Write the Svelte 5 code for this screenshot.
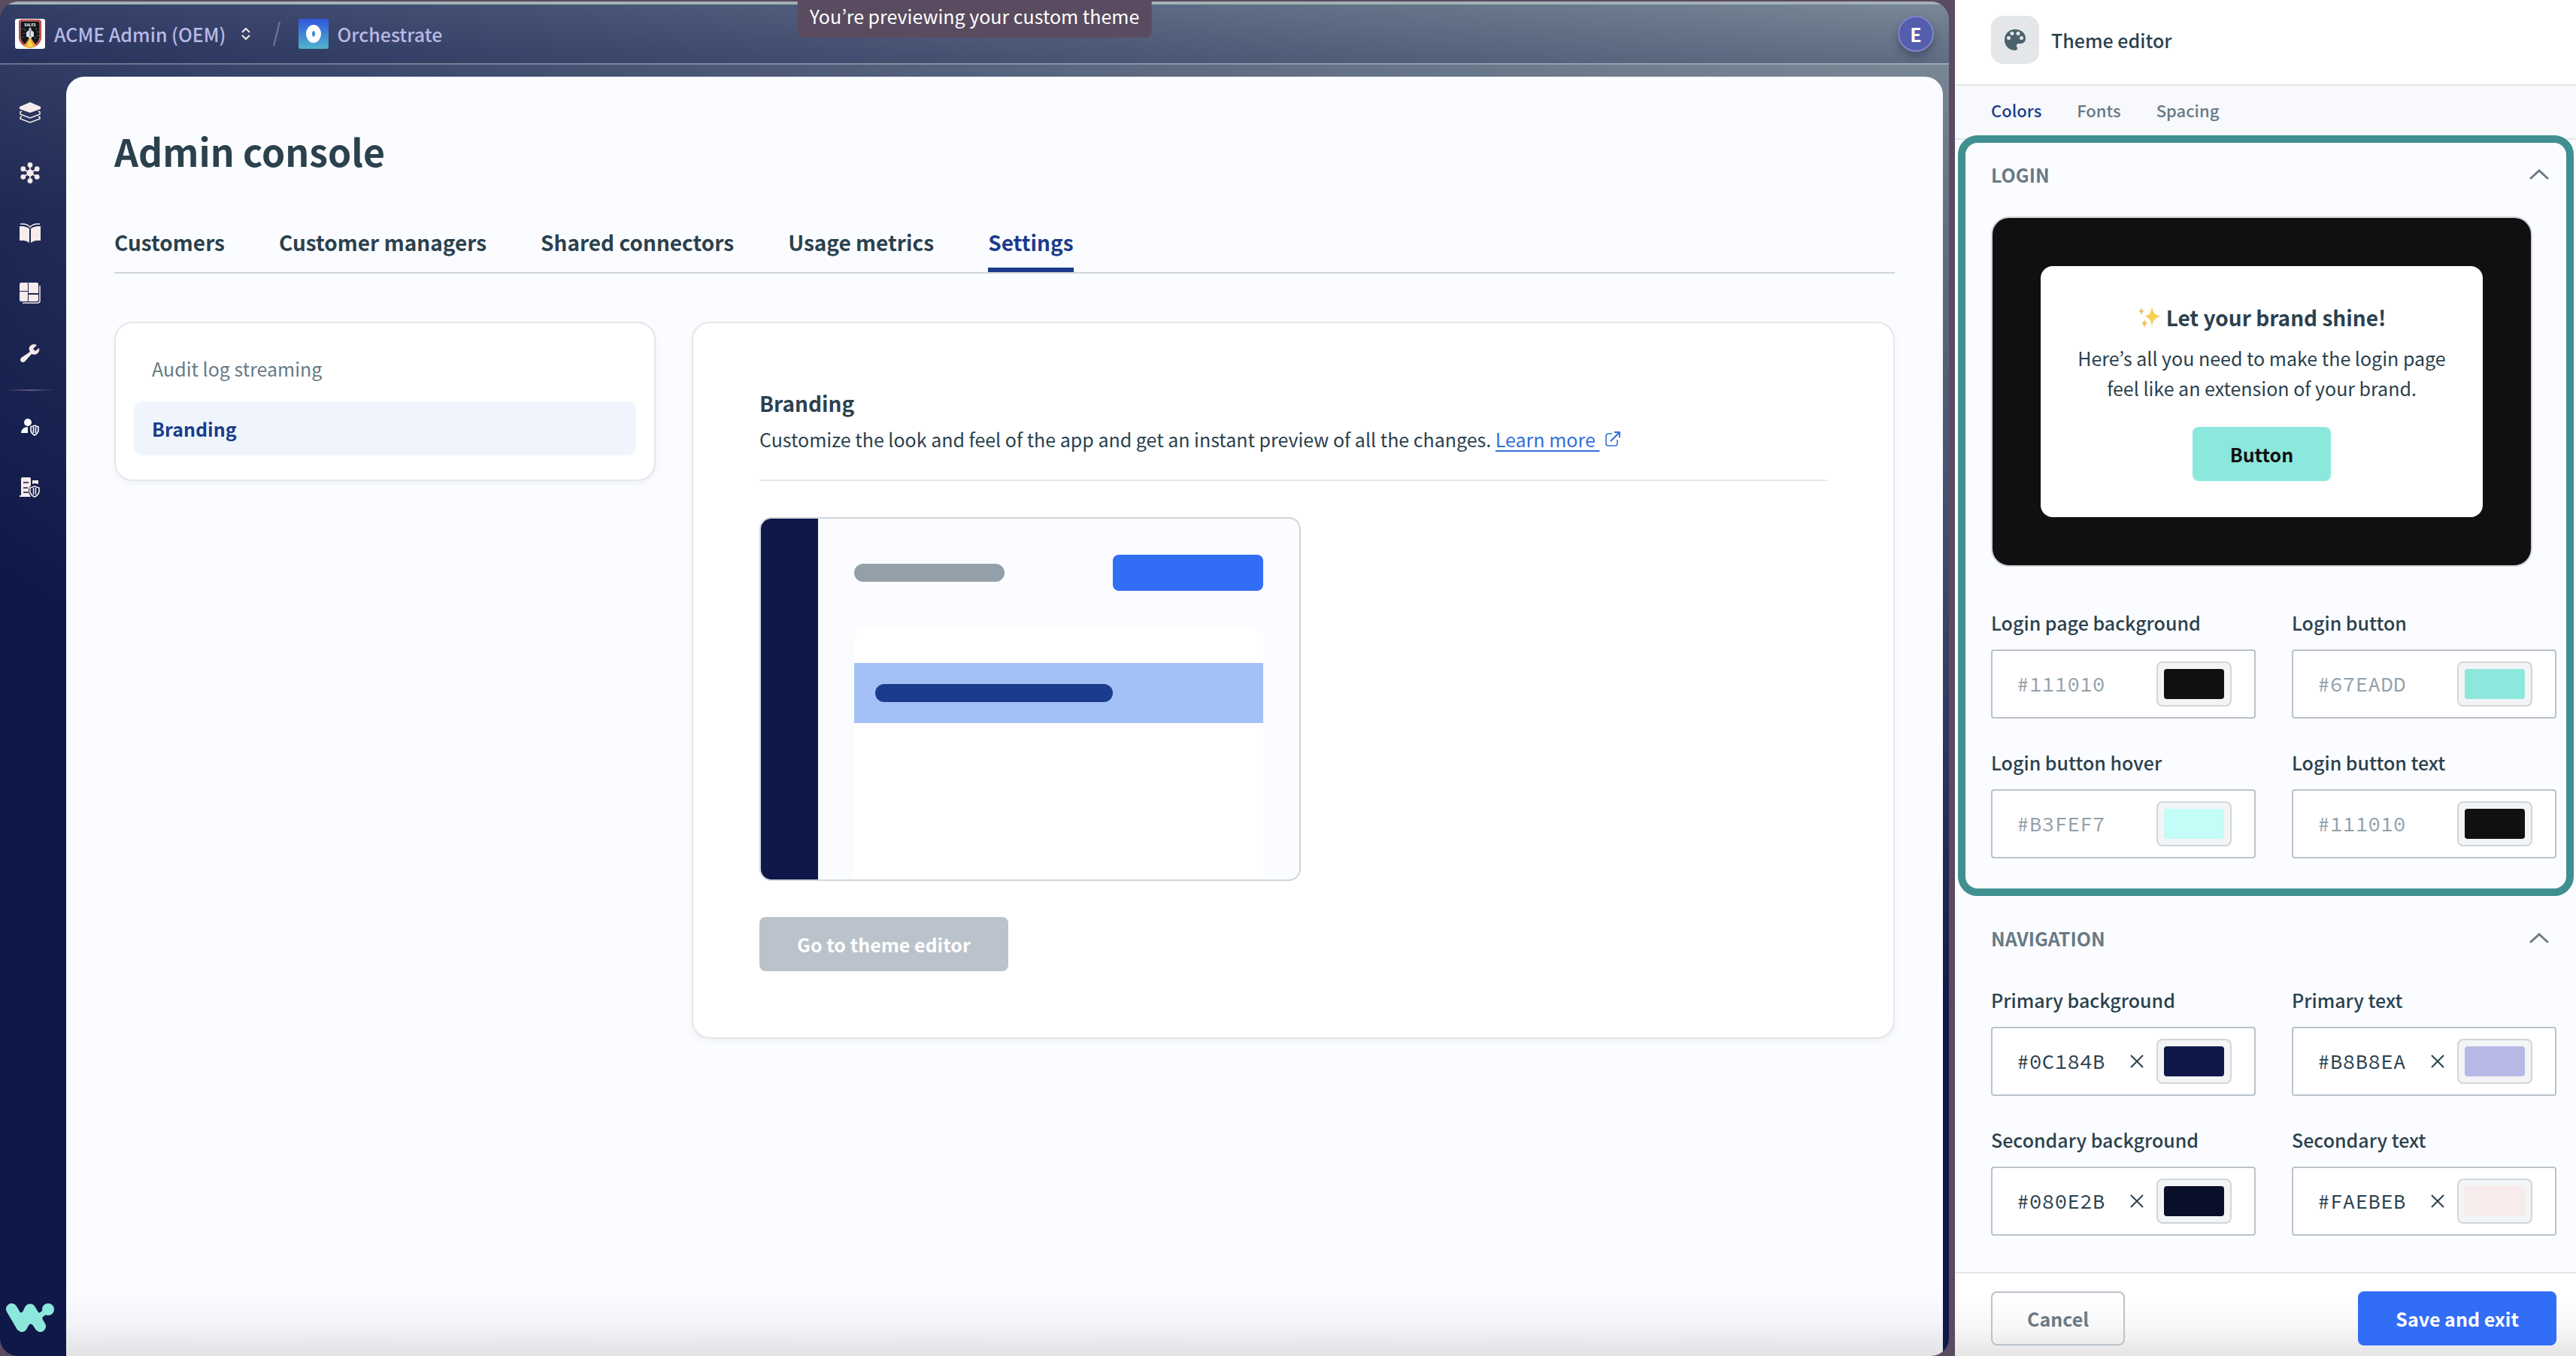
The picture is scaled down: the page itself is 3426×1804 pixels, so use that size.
<script lang="ts">
	type Field = { id: string; label: string; hex: string; swatch: string; custom?: boolean };

	const tabs = ['Customers', 'Customer managers', 'Shared connectors', 'Usage metrics', 'Settings'];
	const editorTabs = ['Colors', 'Fonts', 'Spacing'];

	// swatch holds the rendered colour, hex the value typed by the user
	const loginFields: Field[] = [
		{ id: 'login-bg', label: 'Login page background', hex: '#111010', swatch: '#111010' },
		{ id: 'login-button', label: 'Login button', hex: '#67EADD', swatch: '#8ce8dd' },
		{ id: 'login-hover', label: 'Login button hover', hex: '#B3FEF7', swatch: '#c4fcf7' },
		{ id: 'login-text', label: 'Login button text', hex: '#111010', swatch: '#111010' }
	];
	const navFields: Field[] = [
		{ id: 'nav-bg', label: 'Primary background', hex: '#0C184B', swatch: '#0f1849', custom: true },
		{ id: 'nav-text', label: 'Primary text', hex: '#B8B8EA', swatch: '#b8b8e7', custom: true },
		{ id: 'nav-bg-2', label: 'Secondary background', hex: '#080E2B', swatch: '#090e29', custom: true },
		{ id: 'nav-text-2', label: 'Secondary text', hex: '#FAEBEB', swatch: '#f7ebeb', custom: true }
	];

	let activeTab = $state('Settings');
	let activeEditorTab = $state('Colors');
	let loginOpen = $state(true);
	let navOpen = $state(true);
</script>

{#snippet chevron()}
	<svg class="chevron" viewBox="0 0 26 14" aria-hidden="true">
		<path d="M2 12 13 2l11 10" fill="none" stroke="currentColor" stroke-width="3" stroke-linecap="round" />
	</svg>
{/snippet}

{#snippet colorFields(fields: Field[])}
	<div class="fields">
		{#each fields as f (f.id)}
			<div class="field">
				<label for={f.id}>{f.label}</label>
				<div class="color-box">
					<input
						class="hex"
						id={f.id}
						type="text"
						value={f.custom ? f.hex : ''}
						placeholder={f.custom ? '' : f.hex}
					/>
					{#if f.custom}
						<button class="clear" type="button" aria-label="Clear {f.label}">
							<svg viewBox="0 0 18 18" aria-hidden="true">
								<path d="M1 1l16 16M17 1 1 17" stroke="currentColor" stroke-width="2" />
							</svg>
						</button>
					{/if}
					<input class="swatch" type="color" value={f.swatch} aria-label="{f.label} picker" />
				</div>
			</div>
		{/each}
	</div>
{/snippet}

<div class="screen">
	<div class="workspace">
		<div class="banner">You’re previewing your custom theme</div>

		<div class="app">
			<header class="topbar">
				<button class="crumb" type="button">
					<svg class="crumb-logo" viewBox="0 0 40 40" aria-hidden="true">
						<rect width="40" height="40" rx="3" fill="#fff" />
						<path d="M8 1h24q3 1 3 4v20q-1 11-15 14Q6 36 5 25V5q0-3 3-4Z" fill="#c9302c" />
						<path d="M9 3h22q2 1 2 3v19q-1 9-13 12Q8 34 7 25V6q0-2 2-3Z" fill="#15171b" stroke="#f1e5dc" stroke-width=".6" />
						<path d="M20 24l-8 12q3 2 8 3 5-1 8-3Z" fill="#f2a33a" />
						<path d="M20 26l-4 11q2 1 4 1l4-1Z" fill="#f8d34c" />
						<path d="M20 11q2 2 2 5h1l2 2v6h-3v2h-4v-2h-3v-6l2-2h1q0-3 2-5Z" fill="#d9dfe6" />
						<path d="M20 14v10" stroke="#667" stroke-width="1" />
						<path d="M10 13v1m2 5v1m-2 4v1m18-12v1m2 3v1m-3 7v1m3-4v1M13 14v1" stroke="#ddd" stroke-width="1" />
						<text x="20" y="10" text-anchor="middle" font-size="5" font-weight="700" fill="#fff">SALES</text>
					</svg>
					ACME Admin (OEM)
					<svg class="sorter" viewBox="0 0 12 16" aria-hidden="true">
						<path d="M1 6 6 1l5 5M1 10l5 5 5-5" fill="none" stroke="#f7ebeb" stroke-width="2" />
					</svg>
				</button>
				<svg class="slash" viewBox="0 0 10 34" aria-hidden="true">
					<path d="M9 1 1 33" stroke="#8a8fa8" stroke-opacity=".7" stroke-width="2" />
				</svg>
				<a class="crumb" href="#orchestrate">
					<svg class="crumb-logo" viewBox="0 0 40 40" aria-hidden="true">
						<defs>
							<linearGradient id="orch" x1="0" y1="0" x2="0" y2="1">
								<stop offset="0" stop-color="#3057dd" />
								<stop offset="1" stop-color="#52b4cb" />
							</linearGradient>
						</defs>
						<rect width="40" height="40" rx="3" fill="url(#orch)" />
						<ellipse cx="20" cy="20" rx="6" ry="8" fill="none" stroke="#fff" stroke-width="8" />
					</svg>
					Orchestrate
				</a>
				<button class="avatar" type="button">E</button>
			</header>

			<div class="body">
				<nav class="rail" aria-label="Main">
					<a href="#projects" aria-label="Projects">
						<svg viewBox="0 0 28 28">
							<path d="M14 0 28 6v3l-14 5L0 9V6Z" fill="currentColor" />
							<path d="M3 12 1 13v3l13 5 13-5v-3l-2-1M3 19l-2 1v2l13 5 13-5v-2l-2-1" fill="none" stroke="currentColor" stroke-width="1.5" />
						</svg>
					</a>
					<a href="#connections" aria-label="Connections">
						<svg viewBox="0 0 28 28" fill="currentColor">
							<path d="M14 3v22M5 9l18 10M23 9 5 19" stroke="currentColor" stroke-width="1.8" />
							<circle cx="14" cy="14" r="4.6" />
							<circle cx="14" cy="3.4" r="3.4" /><circle cx="14" cy="24.6" r="3.4" />
							<circle cx="4.8" cy="8.7" r="3.4" /><circle cx="23.2" cy="8.7" r="3.4" />
							<circle cx="4.8" cy="19.3" r="3.4" /><circle cx="23.2" cy="19.3" r="3.4" />
						</svg>
					</a>
					<a href="#library" aria-label="Library">
						<svg viewBox="0 0 28 28" fill="currentColor">
							<path d="M0 5h5q5 1 8 3v19q-4-3-8-3H0ZM28 5h-5q-5 1-8 3v19q4-3 8-3h5Z" />
							<path d="M1 2h4q5 0 9 4 4-4 9-4h4" fill="none" stroke="currentColor" stroke-width="1.6" />
						</svg>
					</a>
					<a href="#dashboards" aria-label="Dashboards">
						<svg viewBox="0 0 28 28" fill="currentColor">
							<path d="M2 0h9v11H0V2q0-2 2-2ZM12 0h11q2 0 2 2v12H12ZM0 12h11v13H2q-2 0-2-2ZM12 16h13v7q0 2-2 2H12Z" />
							<path d="M27 4v20q0 3-3 3H4" fill="none" stroke="currentColor" stroke-width="1.5" />
						</svg>
					</a>
					<a href="#tools" aria-label="Tools">
						<svg viewBox="0 0 28 28" fill="currentColor">
							<path d="M23 3q-6-3-9.5 2-2 3 .5 7L2 20q-2 3 0 5t5 0l9-10q5 2 8-1 3-3 2-7l-5 4-3-3Z" />
						</svg>
					</a>
					<hr />
					<a href="#user-admin" aria-label="User admin">
						<svg viewBox="0 0 28 28" fill="#fff">
							<circle cx="11" cy="8" r="5" />
							<path d="M2 22q1-8 9-8v8Z" />
							<path d="M20 12l5 2v5q-1 4-5 6-4-2-5-6v-5Z" fill="none" stroke="#fff" stroke-width="1.6" />
							<path d="M18.5 14v8M21.5 14v8" stroke="#fff" stroke-width="1.6" />
						</svg>
					</a>
					<a href="#company-admin" aria-label="Company admin">
						<svg viewBox="0 0 28 28" fill="currentColor">
							<path d="M2 3q0-2 2-2h9q2 0 2 2v9q-3 2-3 6 0 5 3 9H0v-2h2Z" />
							<path d="M17 5h8v5l-5-1-3 1Z" />
							<path d="M5 8h7M5 15h6M5 21h7" stroke="#0f1849" stroke-width="1.5" />
							<path d="M20 13l6 2v5q-1 5-6 7-5-2-6-7v-5Z" fill="#0f1849" stroke="currentColor" stroke-width="1.6" />
							<path d="M18.5 15v9M21.5 15v9" stroke="currentColor" stroke-width="1.6" />
						</svg>
					</a>
					<a class="brand" href="#home" aria-label="Home">
						<svg viewBox="0 0 64 38" fill="#8ce8dd">
							<path d="M7.5 7.5 21 30.5 32 8l13.5 22.5" fill="none" stroke="#8ce8dd" stroke-width="15" stroke-linecap="round" stroke-linejoin="round" />
							<path d="M14 8q3 5 7 4t4-5l14 2q4 6 8 2l2 5q-2 2 0 5L38 32q-3-5-5.5-4.5T28 32H18Z" />
							<path d="M56 8 46 16" stroke="#8ce8dd" stroke-width="7" />
							<circle cx="56" cy="8" r="8" />
						</svg>
					</a>
				</nav>

				<main class="content">
					<h1>Admin console</h1>
					<div class="tabs" role="tablist">
						{#each tabs as tab}
							<button
								class:active={tab === activeTab}
								type="button"
								role="tab"
								aria-selected={tab === activeTab}
								onclick={() => (activeTab = tab)}>{tab}</button
							>
						{/each}
					</div>

					<div class="columns">
						<nav class="card menu" aria-label="Settings">
							<a href="#audit">Audit log streaming</a>
							<a class="current" href="#branding" aria-current="page">Branding</a>
						</nav>

						<section class="card branding">
							<h2>Branding</h2>
							<p class="lead">
								Customize the look and feel of the app and get an instant preview of all the changes.
								<a href="#learn"
									><span>Learn more&nbsp;</span><svg viewBox="0 0 20 20" aria-hidden="true">
										<path d="M9 3H4Q1 3 1 6v10q0 3 3 3h9q3 0 3-3v-5" fill="none" stroke="currentColor" stroke-width="1.6" />
										<path d="M7 13 18 2M12 1h7v7" fill="none" stroke="currentColor" stroke-width="2.2" />
									</svg></a
								>
							</p>
							<div class="mock" aria-hidden="true">
								<div class="mock-rail"></div>
								<div class="mock-page">
									<div class="mock-head">
										<span class="mock-title"></span>
										<span class="mock-button"></span>
									</div>
									<div class="mock-list">
										<div class="mock-row"><span></span></div>
									</div>
								</div>
							</div>
							<button class="btn disabled" type="button" disabled>Go to theme editor</button>
						</section>
					</div>
				</main>
			</div>
		</div>
	</div>

	<aside class="editor">
		<header class="editor-head">
			<span class="editor-icon">
				<svg viewBox="0 0 28 28" aria-hidden="true">
					<path
						d="M14 0C6 0 0 6 0 14s6 14 14 14q3 0 3-3 0-1-1-2-1-3 2-4h4q6-1 6-7C28 5 22 0 14 0Z"
						fill="#4b616d"
					/>
					<g fill="#e3e7ea">
						<circle cx="5.5" cy="11.5" r="2.5" /><circle cx="10" cy="5.5" r="2.5" />
						<circle cx="18" cy="5.5" r="2.5" /><circle cx="22.5" cy="11.5" r="2.5" />
					</g>
				</svg>
			</span>
			<h2>Theme editor</h2>
		</header>
		<div class="editor-tabs" role="tablist">
			{#each editorTabs as tab}
				<button
					class:active={tab === activeEditorTab}
					type="button"
					role="tab"
					aria-selected={tab === activeEditorTab}
					onclick={() => (activeEditorTab = tab)}>{tab}</button
				>
			{/each}
		</div>

		<div class="editor-body">
			<section class="group highlighted">
				<button class="group-head" type="button" aria-expanded={loginOpen} onclick={() => (loginOpen = !loginOpen)}>
					LOGIN {@render chevron()}
				</button>
				{#if loginOpen}
					<div class="login-preview">
						<div class="login-card">
							<h3>
								<svg viewBox="0 0 30 30" aria-hidden="true">
									<path d="M19 1q1 11 11 13-10 2-11 14-1-12-9-14 8-2 9-13Z" fill="#f7cf52" />
									<path d="M5 1q0 5 4 6-4 1-4 6 0-5-4-6 4-1 4-6ZM9 18q1 4 4 5-3 1-4 6-1-5-4-6 3-1 4-5Z" fill="#f5bd60" />
								</svg>
								Let your brand shine!
							</h3>
							<p>Here’s all you need to make the login page feel like an extension of your brand.</p>
							<button class="btn sample" type="button">Button</button>
						</div>
					</div>
					{@render colorFields(loginFields)}
				{/if}
			</section>
			<section class="group">
				<button class="group-head" type="button" aria-expanded={navOpen} onclick={() => (navOpen = !navOpen)}>
					NAVIGATION {@render chevron()}
				</button>
				{#if navOpen}
					{@render colorFields(navFields)}
				{/if}
			</section>
		</div>

		<footer class="editor-foot">
			<button class="btn outline" type="button">Cancel</button>
			<button class="btn primary" type="button">Save and exit</button>
		</footer>
	</aside>
</div>

<style>
	:global(body) {
		margin: 0;
	}

	.screen {
		display: flex;
		height: 100vh;
		overflow: hidden;
		background: #5a4b60;
		color: #2b414d;
		font-family: 'Source Sans Pro', 'Noto Sans CJK JP', 'Noto Sans', sans-serif;
		font-size: 25px;
		line-height: 40px;
	}
	.screen * {
		box-sizing: border-box;
	}
	h1,
	h2,
	h3,
	p {
		margin: 0;
	}
	button,
	input {
		font: inherit;
		color: inherit;
		margin: 0;
	}
	button {
		padding: 0;
		border: 0;
		background: none;
		cursor: pointer;
	}
	a {
		color: inherit;
		text-decoration: none;
	}
	svg {
		display: block;
		flex: none;
	}

	.workspace {
		position: relative;
		display: flex;
		flex: 1;
		min-width: 0;
		margin-right: 8px;
		padding-top: 2px;
	}
	.banner {
		position: absolute;
		z-index: 1;
		top: 0;
		left: 50%;
		transform: translateX(-50%);
		padding: 1px 16px 9px;
		border-radius: 0 0 8px 8px;
		background: #5a4b60;
		color: #fff;
		white-space: nowrap;
	}
	.app {
		display: flex;
		flex: 1;
		flex-direction: column;
		min-width: 0;
		overflow: hidden;
		border-radius: 24px;
		background:
			linear-gradient(rgb(150 170 200 / 0.18), transparent 280px),
			radial-gradient(120% 75% at 100% 0, #7a8891, rgb(15 24 73 / 0)),
			#0f1849;
	}

	.topbar {
		display: flex;
		align-items: center;
		height: 84px;
		padding: 0 20px;
		border-top: 4px solid #a3b1b5;
		border-bottom: 2px solid rgb(255 255 255 / 0.3);
		background: linear-gradient(rgb(15 24 73 / 0.05), rgb(15 24 73 / 0.25));
		color: #b8b8e7;
	}
	.crumb {
		display: flex;
		align-items: center;
		font-weight: 500;
	}
	.crumb-logo {
		width: 40px;
		height: 40px;
		margin-right: 12px;
	}
	.sorter {
		width: 12px;
		height: 16px;
		margin-left: 20px;
	}
	.slash {
		width: 10px;
		height: 34px;
		margin: 0 24px 0 30px;
	}
	.avatar {
		width: 48px;
		height: 48px;
		margin-left: auto;
		border: 2px solid #8085c8;
		border-radius: 50%;
		background: #535ead;
		box-shadow: 0 6px 12px rgb(20 24 60 / 0.35);
		color: #fff;
		font-weight: 700;
	}

	.body {
		display: flex;
		flex: 1;
		min-height: 0;
	}
	.rail {
		display: flex;
		flex: 0 0 88px;
		flex-direction: column;
		padding: 24px 8px 32px 0;
		color: #f7ebeb;
	}
	.rail a {
		display: flex;
		align-items: center;
		justify-content: center;
		height: 80px;
	}
	.rail svg {
		width: 28px;
		height: 28px;
	}
	.rail hr {
		width: 64px;
		height: 2px;
		margin: 8px auto;
		border: 0;
		background: linear-gradient(90deg, transparent, #5f5a80, transparent);
	}
	.rail .brand {
		height: 38px;
		margin-top: auto;
	}
	.rail .brand svg {
		width: 64px;
		height: 38px;
	}

	.content {
		flex: 1;
		min-width: 0;
		margin: 16px 8px 0 0;
		padding: 66px 64px 0;
		border-radius: 24px 24px 0 0;
		background:
			linear-gradient(transparent calc(100% - 88px), rgb(0 0 0 / 0.03) calc(100% - 44px), rgb(0 0 0 / 0.1)),
			#fbfcff;
	}
	h1 {
		font-size: 50px;
		font-weight: 700;
		line-height: 64px;
	}
	.tabs {
		display: flex;
		gap: 72px;
		margin-top: 70px;
		border-bottom: 2px solid #d0d6db;
	}
	.tabs button {
		padding-bottom: 14px;
		border-bottom: 6px solid transparent;
		font-size: 28px;
		font-weight: 700;
	}
	.tabs .active {
		border-color: #1b3c8c;
		color: #1b3c8c;
	}

	.columns {
		display: grid;
		grid-template-columns: 720fr 1600fr;
		align-items: start;
		gap: 48px;
		margin-top: 64px;
	}
	.card {
		border: 2px solid #e3e7ea;
		border-radius: 24px;
		background: #fff;
		box-shadow: 0 4px 8px rgb(43 65 77 / 0.05);
	}
	.menu {
		display: grid;
		gap: 8px;
		padding: 24px 24px 32px;
	}
	.menu a {
		padding: 16px 24px;
		border-radius: 12px;
		color: #687a85;
	}
	.menu .current {
		background: #f0f5fd;
		color: #1b3c8c;
		font-weight: 700;
	}
	.branding {
		padding: 86px 88px 88px;
	}
	.branding h2 {
		font-size: 28px;
		font-weight: 700;
	}
	.lead {
		margin-top: 8px;
		padding-bottom: 34px;
		border-bottom: 2px solid #e3e7ea;
	}
	.lead a {
		display: inline-flex;
		align-items: center;
		gap: 8px;
		color: #3371d6;
	}
	.lead a span {
		text-decoration: underline;
		text-decoration-thickness: 2px;
		text-underline-offset: 4px;
	}
	.lead svg {
		width: 20px;
		height: 20px;
	}

	.mock {
		display: flex;
		width: 720px;
		max-width: 100%;
		height: 484px;
		margin: 48px 0;
		overflow: hidden;
		border: 2px solid #cfd5db;
		border-radius: 16px;
		background: #fbfcff;
	}
	.mock-rail {
		width: 76px;
		background: #0f1849;
	}
	.mock-page {
		display: flex;
		flex: 1;
		flex-direction: column;
		padding: 48px 48px 0;
	}
	.mock-head {
		display: flex;
		align-items: center;
		justify-content: space-between;
	}
	.mock-title {
		width: 200px;
		height: 24px;
		border-radius: 12px;
		background: #93a0a9;
	}
	.mock-button {
		width: 200px;
		height: 48px;
		border-radius: 8px;
		background: #326df5;
	}
	.mock-list {
		flex: 1;
		margin-top: 48px;
		padding-top: 48px;
		border-radius: 16px 16px 0 0;
		background: #fff;
	}
	.mock-row {
		display: flex;
		align-items: center;
		height: 80px;
		padding-left: 28px;
		background: #a4c1f7;
	}
	.mock-row span {
		width: 316px;
		height: 24px;
		border-radius: 12px;
		background: #1b3c8c;
	}

	.btn {
		height: 72px;
		padding: 0 50px;
		border-radius: 8px;
		font-weight: 700;
	}
	.disabled {
		background: #bac3cb;
		color: #fff;
	}
	.primary {
		background: #326df5;
		color: #fff;
	}
	.outline {
		border: 2px solid #bac3cb;
		background: none;
		color: #687a85;
		padding: 0 46px;
	}
	.sample {
		background: #8ce8dd;
		color: #111010;
	}

	.editor {
		display: flex;
		flex: 0 0 826px;
		flex-direction: column;
		background: #fbfcff;
	}
	.editor-head {
		display: flex;
		align-items: center;
		gap: 16px;
		padding: 21px 48px 27px;
		border-bottom: 2px solid #e3e7ea;
		background: #fff;
	}
	.editor-head h2 {
		font-size: 25px;
		font-weight: 500;
	}
	.editor-icon {
		display: grid;
		place-items: center;
		width: 64px;
		height: 64px;
		border-radius: 16px;
		background: #e3e7ea;
	}
	.editor-icon svg {
		width: 28px;
		height: 28px;
	}
	.editor-tabs {
		display: flex;
		gap: 47px;
		height: 72px;
		padding: 12px 48px 0;
		border-bottom: 2px solid #e3e7ea;
		background: #f7f9fc;
		color: #687a85;
		font-size: 22px;
	}
	.editor-tabs button {
		align-self: start;
		font-weight: 500;
	}
	.editor-tabs .active {
		color: #1b3c8c;
	}

	.editor-body {
		flex: 1;
		min-height: 0;
	}
	.group {
		position: relative;
		padding: 34px 26px 0 48px;
	}
	.highlighted {
		padding-top: 26px;
		padding-bottom: 52px;
	}
	.highlighted::after {
		content: '';
		position: absolute;
		inset: -6px 3px 2px 4px;
		border: 10px solid #408f91;
		border-radius: 26px;
		pointer-events: none;
	}
	.group-head {
		display: flex;
		align-items: center;
		justify-content: space-between;
		width: 100%;
		padding-right: 10px;
		color: #687a85;
		font-weight: 700;
	}
	.chevron {
		width: 26px;
		height: 14px;
	}
	.fields {
		display: grid;
		grid-template-columns: 1fr 1fr;
		gap: 38px 48px;
		margin-top: 42px;
	}
	.field {
		display: grid;
		gap: 16px;
	}
	.field label {
		font-weight: 500;
	}
	.color-box {
		display: flex;
		align-items: center;
		height: 92px;
		padding: 0 30px 0 32px;
		border: 2px solid #bac3cb;
		border-radius: 4px;
		background: #fff;
	}
	.hex {
		flex: 1;
		width: 0;
		padding: 0;
		border: 0;
		outline: 0;
		background: none;
		font-family: 'Source Code Pro', 'Liberation Mono', monospace;
		font-size: 28px;
	}
	.hex::placeholder {
		color: #93a0a9;
		opacity: 1;
	}
	.clear {
		margin-right: 17px;
	}
	.clear svg {
		width: 18px;
		height: 18px;
	}
	.swatch {
		appearance: none;
		width: 100px;
		height: 60px;
		padding: 0;
		border: 2px solid #d0d6db;
		border-radius: 8px;
		background: #f2f4f5;
	}
	.swatch::-webkit-color-swatch-wrapper {
		padding: 8px;
	}
	.swatch::-webkit-color-swatch {
		border: 0;
		border-radius: 4px;
	}

	.login-preview {
		margin: 36px 32px 54px 0;
		padding: 64px;
		border: 2px solid #cfd5db;
		border-radius: 24px;
		background: #111010;
	}
	.login-preview + .fields {
		margin-top: 0;
	}
	.login-card {
		display: flex;
		flex-direction: column;
		align-items: center;
		padding: 48px 40px;
		border-radius: 16px;
		background: #fff;
		text-align: center;
	}
	.login-card h3 {
		display: flex;
		align-items: center;
		gap: 8px;
		font-size: 28px;
		font-weight: 700;
	}
	.login-card h3 svg {
		width: 30px;
		height: 30px;
	}
	.login-card p {
		margin: 14px 0 32px;
	}

	.editor-foot {
		display: flex;
		justify-content: space-between;
		padding: 24px 26px 14px 48px;
		border-top: 2px solid #e3e7ea;
		background: linear-gradient(transparent 30%, rgb(0 0 0 / 0.03) 65%, rgb(0 0 0 / 0.1)), #fff;
	}
</style>
